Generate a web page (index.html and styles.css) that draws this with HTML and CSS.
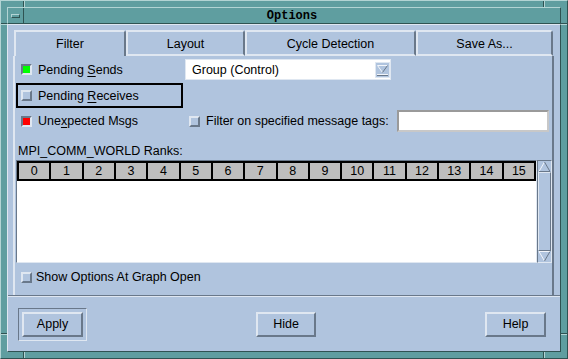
FILE: index.html
```html
<!DOCTYPE html>
<html lang="en">

<head>
  <meta charset="UTF-8">
  <meta name="viewport" content="width=device-width, initial-scale=1.0">
  <title>Options</title>
  <link rel="stylesheet" href="styles.css">
</head>

<body>
  <div class="window">
    <!-- resize handle marks on the frame -->
    <span class="mark mark-v mark-tl"></span>
    <span class="mark mark-v mark-tr"></span>
    <span class="mark mark-v mark-bl"></span>
    <span class="mark mark-v mark-br"></span>
    <span class="mark mark-h mark-lt"></span>
    <span class="mark mark-h mark-rt"></span>
    <span class="mark mark-h mark-lb"></span>
    <span class="mark mark-h mark-rb"></span>

    <div class="titlebar">
      <div class="menu-btn"><span class="menu-bar"></span></div>
      <div class="title">Options</div>
    </div>

    <div class="content">
      <div class="notebook">
        <div class="tabs">
          <div class="tab tab-filter active">Filter</div>
          <div class="tab tab-layout">Layout</div>
          <div class="tab tab-cycle">Cycle Detection</div>
          <div class="tab tab-save">Save As...</div>
        </div>

        <div class="panel">
          <div class="row row-sends">
            <div class="check-item col-left">
              <span class="box on green"></span>
              <span>Pending <u>S</u>ends</span>
            </div>
            <div class="combo">
              <span class="combo-text">Group (Control)</span>
              <span class="combo-arrow">
                <svg width="15" height="16" viewBox="0 0 15 16">
                  <rect x="0.5" y="0.5" width="14" height="15" fill="#b0c4de" stroke="#dfe7f1" />
                  <polyline points="7.5,10.5 2.5,3.5 12.5,3.5" fill="none" stroke="#f2f5fa" />
                  <polyline points="12.5,3.5 7.5,10.5" fill="none" stroke="#69788a" />
                  <line x1="2" y1="12.5" x2="13" y2="12.5" stroke="#f2f5fa" />
                  <line x1="2" y1="13.5" x2="13" y2="13.5" stroke="#69788a" />
                </svg>
              </span>
            </div>
          </div>

          <div class="row row-receives">
            <div class="check-item focus">
              <span class="box"></span>
              <span>Pending <u>R</u>eceives</span>
            </div>
          </div>

          <div class="row row-unexpected">
            <div class="check-item col-left wide">
              <span class="box on red"></span>
              <span>Une<u>x</u>pected Msgs</span>
            </div>
            <div class="check-item">
              <span class="box"></span>
              <span>Filter on specified message tags:</span>
            </div>
            <div class="textfield"></div>
          </div>

          <div class="ranks-label">MPI_COMM_WORLD Ranks:</div>

          <div class="ranks">
            <div class="ranks-view">
              <div class="ranks-head">
                <div class="rank">0</div>
                <div class="rank">1</div>
                <div class="rank">2</div>
                <div class="rank">3</div>
                <div class="rank">4</div>
                <div class="rank">5</div>
                <div class="rank">6</div>
                <div class="rank">7</div>
                <div class="rank">8</div>
                <div class="rank">9</div>
                <div class="rank">10</div>
                <div class="rank">11</div>
                <div class="rank">12</div>
                <div class="rank">13</div>
                <div class="rank">14</div>
                <div class="rank">15</div>
              </div>
            </div>
            <div class="scrollbar">
              <svg class="arrow" width="13" height="11" viewBox="0 0 13 11">
                <line x1="1" y1="10.5" x2="6.5" y2="1" stroke="#f2f5fa" />
                <line x1="6.5" y1="1" x2="12" y2="10.5" stroke="#69788a" />
                <line x1="1" y1="10.5" x2="12" y2="10.5" stroke="#69788a" />
              </svg>
              <div class="thumb"></div>
              <svg class="arrow" width="13" height="11" viewBox="0 0 13 11">
                <line x1="1" y1="0.5" x2="12" y2="0.5" stroke="#f2f5fa" />
                <line x1="1" y1="0.5" x2="6.5" y2="10" stroke="#f2f5fa" />
                <line x1="6.5" y1="10" x2="12" y2="0.5" stroke="#69788a" />
              </svg>
            </div>
          </div>

          <div class="check-item show-row">
            <span class="box"></span>
            <span>Show Options At Graph Open</span>
          </div>
        </div>
      </div>

      <div class="separator"></div>

      <div class="buttons">
        <div class="default-frame"><button class="btn btn-apply">Apply</button></div>
        <button class="btn btn-hide">Hide</button>
        <button class="btn btn-help">Help</button>
      </div>
    </div>
  </div>
</body>

</html>
```

FILE: styles.css
```css
* {
  box-sizing: border-box;
}

body {
  margin: 0;
  background-color: #5f9ea0;
  font-family: "Liberation Sans", Arial, sans-serif;
  font-size: 12.5px;
  color: #000;
}

/* window frame */
.window {
  position: relative;
  width: 568px;
  height: 359px;
  padding: 6px;
  background-color: #5f9ea0;
  border: 1px solid;
  border-color: #b2d4d4 #2f5352 #2f5352 #b2d4d4;
  display: flex;
  flex-direction: column;
}

.mark {
  position: absolute;
}

.mark-v {
  width: 2px;
  height: 6px;
  border-left: 1px solid #2f5352;
  border-right: 1px solid #b2d4d4;
}

.mark-h {
  width: 6px;
  height: 2px;
  border-top: 1px solid #2f5352;
  border-bottom: 1px solid #b2d4d4;
}

.mark-tl { left: 22px; top: 0; }
.mark-tr { left: 542px; top: 0; }
.mark-bl { left: 22px; bottom: 0; }
.mark-br { left: 542px; bottom: 0; }
.mark-lt { left: 0; top: 22px; }
.mark-rt { right: 0; top: 22px; }
.mark-lb { left: 0; top: 332px; }
.mark-rb { right: 0; top: 332px; }

.titlebar {
  height: 17px;
  display: flex;
  border: 1px solid;
  border-color: #b2d4d4 #2f5352 #2f5352 #b2d4d4;
}

.menu-btn {
  width: 16px;
  border-right: 1px solid #2f5352;
  display: flex;
  align-items: center;
  justify-content: center;
}

.menu-bar {
  width: 9px;
  height: 4px;
  border: 1px solid;
  border-color: #b2d4d4 #2f5352 #2f5352 #b2d4d4;
}

.title {
  flex: 1;
  text-align: center;
  font-family: "Liberation Mono", "Courier New", monospace;
  font-weight: bold;
  font-size: 12px;
  line-height: 16px;
  color: #000;
}

/* client area */
.content {
  flex: 1;
  background-color: #b0c4de;
  border: 1px solid;
  border-color: #dfe7f1 #2f5352 #2f5352 #dfe7f1;
  display: flex;
  flex-direction: column;
}

.notebook {
  width: 541px;
  margin: 5px 0 0 5px;
}

.tabs {
  display: flex;
  height: 26px;
  padding-left: 1px;
}

.tab {
  height: 26px;
  border-top: 2px solid #dfe7f1;
  border-left: 2px solid #dfe7f1;
  border-right: 2px solid #69788a;
  border-bottom: 2px solid #dfe7f1;
  border-top-right-radius: 3px;
  text-align: center;
  line-height: 24px;
}

.tab.active {
  border-bottom: none;
  line-height: 25px;
}

.tab-filter { width: 112px; }
.tab-layout { width: 119px; }
.tab-cycle { width: 171px; }
.tab-save { width: 137px; }

.panel {
  height: 239px;
  border-left: 2px solid #dfe7f1;
  border-right: 2px solid #69788a;
}

.row {
  display: flex;
  align-items: center;
}

.row-sends { height: 27px; }
.row-receives { height: 25px; }
.row-unexpected { height: 26px; }

.check-item {
  display: flex;
  align-items: center;
  white-space: nowrap;
}

.col-left {
  width: 170px;
  padding-left: 6px;
}

.col-left.wide {
  width: 174px;
}

.box {
  width: 11px;
  height: 11px;
  margin-right: 6px;
  background-color: #b0c4de;
  border: 2px solid;
  border-color: #dfe7f1 #69788a #69788a #dfe7f1;
}

.box.on {
  border-color: #69788a #dfe7f1 #dfe7f1 #69788a;
}

.green { background-color: #00ff00; }
.red { background-color: #ff0000; }

u {
  text-underline-offset: 2px;
}

.focus {
  width: 167px;
  height: 25px;
  margin-left: 1px;
  padding-left: 3px;
  border: 2px solid #000;
}

.combo {
  width: 206px;
  height: 21px;
  background-color: #fff;
  border: 1px solid #dfe7f1;
  display: flex;
  align-items: center;
  padding-left: 6px;
}

.combo-text {
  flex: 1;
}

.combo-arrow {
  display: flex;
}

.textfield {
  width: 152px;
  height: 22px;
  margin-left: auto;
  margin-right: 3px;
  background-color: #fff;
  border: 2px solid;
  border-color: #9a9a9a #c8c8c8 #c8c8c8 #9a9a9a;
}

.ranks-label {
  height: 26px;
  padding: 10px 0 0 3px;
  line-height: 14px;
}

.ranks {
  display: flex;
  height: 103px;
  margin-left: 1px;
}

.ranks-view {
  width: 521px;
  background-color: #fff;
  border: 1px solid;
  border-color: #69788a #dfe7f1 #dfe7f1 #69788a;
}

.ranks-head {
  display: grid;
  grid-template-columns: repeat(16, 1fr);
  gap: 2px;
  padding: 2px;
  width: 519px;
  height: 20px;
  background-color: #000;
}

.rank {
  background-color: #bebebe;
  text-align: center;
  line-height: 16px;
}

.scrollbar {
  width: 15px;
  display: flex;
  flex-direction: column;
  align-items: center;
  background-color: #b0c4de;
  border: 1px solid;
  border-color: #69788a #dfe7f1 #dfe7f1 #69788a;
}

.arrow {
  display: block;
  flex: none;
}

.thumb {
  flex: 1;
  width: 13px;
  border: 1px solid;
  border-color: #dfe7f1 #69788a #69788a #dfe7f1;
}

.show-row {
  height: 28px;
  padding-left: 6px;
}

.show-row .box {
  margin-right: 4px;
}

.separator {
  margin-top: auto;
  height: 2px;
  border-top: 1px solid #69788a;
  border-bottom: 1px solid #dfe7f1;
}

.buttons {
  height: 54px;
  display: flex;
  align-items: center;
  justify-content: space-between;
  padding: 0 14px 0 10px;
}

.default-frame {
  width: 69px;
  height: 33px;
  padding: 3px;
  border: 1px solid;
  border-color: #69788a #dfe7f1 #dfe7f1 #69788a;
}

.btn {
  width: 60px;
  height: 25px;
  padding: 0;
  background-color: #b0c4de;
  font-family: inherit;
  font-size: 12.5px;
  color: #000;
  border: 2px solid;
  border-color: #dfe7f1 #69788a #69788a #dfe7f1;
}

.btn-apply,
.btn-help {
  width: 61px;
}
```
